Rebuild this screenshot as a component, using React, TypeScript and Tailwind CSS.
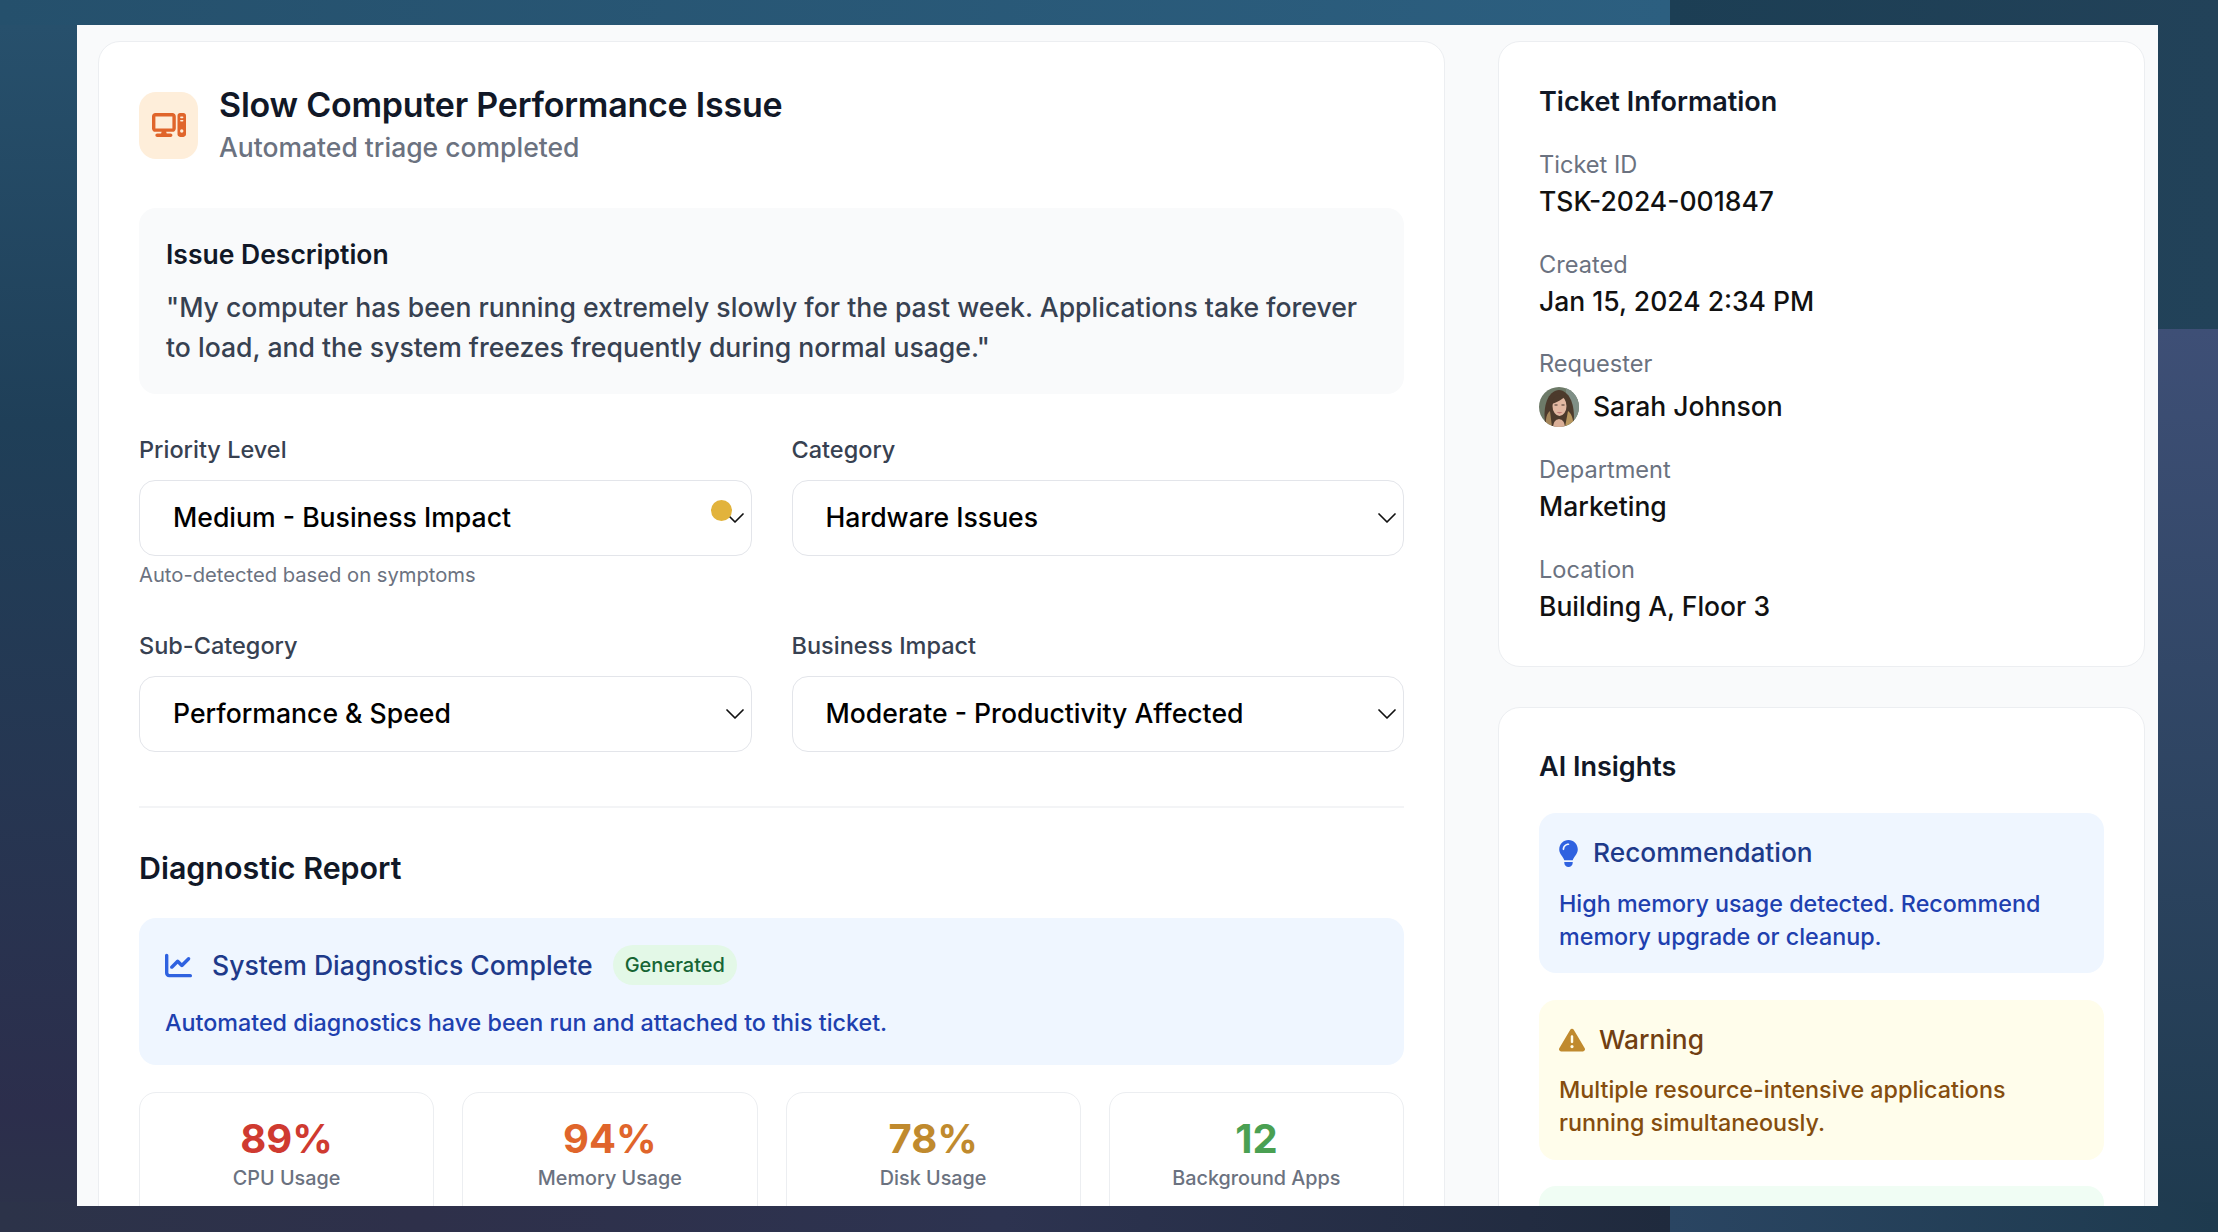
import { ChevronDown } from 'lucide-react';
import { FaChartLine, FaComputer, FaLightbulb, FaTriangleExclamation } from 'react-icons/fa6';

const infoRows = [
  { label: 'Ticket ID', value: 'TSK-2024-001847', gap: 'mt-[29px]' },
  { label: 'Created', value: 'Jan 15, 2024 2:34 PM', gap: 'mt-[30px]' },
];

const infoRowsAfter = [
  { label: 'Department', value: 'Marketing', gap: 'mt-[27px]' },
  { label: 'Location', value: 'Building A, Floor 3', gap: 'mt-[30px]' },
];

const stats = [
  { value: '89%', label: 'CPU Usage', color: 'text-[#cf3a30]' },
  { value: '94%', label: 'Memory Usage', color: 'text-[#e0652b]' },
  { value: '78%', label: 'Disk Usage', color: 'text-[#c08a2e]' },
  { value: '12', label: 'Background Apps', color: 'text-[#4aa052]' },
];

function Avatar() {
  return (
    <svg viewBox="0 0 40 40" className="w-[40px] h-[40px] rounded-full shrink-0">
      <rect width="40" height="40" fill="#6d7a68" />
      <rect x="27" width="13" height="40" fill="#7f8f86" />
      <g className="blur-[0.6px]">
        <path d="M7 40 C3 24 7 4 20 3 C33 4 37 24 34 40 Z" fill="#4c3a2c" />
        <path d="M7 40 C6 32 8 26 11 24 L13 40 Z" fill="#a3855a" />
        <path d="M34 40 C35 32 32 26 29 24 L26 40 Z" fill="#b8975f" />
        <path d="M14 40 C15 34 16 33 20 32 C24 33 25 34 26 40 Z" fill="#d9ae97" />
        <ellipse cx="20.5" cy="19" rx="7" ry="10" fill="#e2b8a2" />
        <path d="M13 17 C13 9 19 7 26 9 C23 13 18 15 13 17 Z" fill="#4c3a2c" />
        <path d="M17.5 25 Q20.5 27.5 23.5 25 Q20.5 26 17.5 25 Z" fill="#a8404e" />
        <rect x="15.5" y="17.5" width="3" height="1" fill="#40302a" />
        <rect x="22.5" y="17.5" width="3" height="1" fill="#40302a" />
      </g>
    </svg>
  );
}

function Field({ label, value, dot, hint }: { label: string; value: string; dot?: boolean; hint?: string }) {
  return (
    <div className="min-w-0">
      <div className="text-[23.5px] leading-[28px] font-medium text-[#374151]">{label}</div>
      <div className="relative mt-[16px] h-[76px] flex items-center pl-[33px] rounded-[16px] bg-white border-[1.5px] border-[#e3e5ea]">
        <span className="flex-1 text-[26.6px] font-medium text-black">{value}</span>
        <ChevronDown className="w-[32px] h-[32px] text-[#111]" strokeWidth={1.3} />
        {dot && <span className="absolute left-[571px] top-[19px] w-[21px] h-[21px] rounded-full bg-[#e2b33c]" />}
      </div>
      {hint && <div className="mt-[7px] text-[20.2px] leading-[24px] text-[#6b7280]">{hint}</div>}
    </div>
  );
}

export default function App() {
  return (
    <div className="relative w-[2218px] h-[1232px] overflow-hidden font-['Inter',sans-serif] bg-[#1f3a50]">
      {/* backdrop pieces, the offset tiles are visible around the sheet */}
      <div className="absolute inset-0 grid grid-cols-[1670px_548px] grid-rows-[329px_903px]">
        <div className="row-span-2 bg-[linear-gradient(to_right,#25506c,#2c5f80)] relative">
          <div className="absolute left-0 top-[25px] w-[80px] h-[1207px] bg-[linear-gradient(to_bottom,#27506c,#1f3f58_33%,#2c2e4c_90%,#2c3349)]" />
          <div className="absolute left-0 bottom-0 w-full h-[30px] bg-[linear-gradient(to_right,#2c3349,#2e304a_25%,#2d3350_60%,#1f2a3d)]" />
        </div>
        <div className="bg-[linear-gradient(to_right,#1c3e54,#224259)]" />
        <div className="relative bg-[linear-gradient(to_bottom,#3e4f76,#1e3a4e)]">
          <div className="absolute left-0 bottom-0 w-full h-[30px] bg-[linear-gradient(to_right,#2a4562,#1e3a4e)]" />
        </div>
      </div>

      <div className="relative mt-[25px] ml-[77px] w-[2081px] h-[1181px] overflow-hidden bg-[#f9fafb] pt-[16px] pl-[21px] pr-[13px] flex gap-[53px] items-start">
        <section className="w-[1347px] shrink-0 bg-white rounded-[22px] border-[1.5px] border-[#eceef1] pt-[42px] px-[40px]">
          <header className="flex items-center gap-[21px]">
            <div className="w-[59px] h-[67px] -mt-[2px] rounded-[17px] bg-[#feeeda] flex items-center justify-center shrink-0">
              <FaComputer className="w-[34px] h-[34px] text-[#e0652b]" />
            </div>
            <div>
              <h1 className="text-[34px] leading-[42px] tracking-[-0.23px] font-semibold text-[#111827]">Slow Computer Performance Issue</h1>
              <p className="text-[26.5px] leading-[42px] font-medium text-[#6b7280]">Automated triage completed</p>
            </div>
          </header>

          <div className="mt-[40px] h-[186px] rounded-[17px] bg-[#f9fafb] px-[27px] pt-[28px]">
            <h2 className="text-[26.5px] leading-[36px] font-semibold text-[#111827]">Issue Description</h2>
            <p className="mt-[16px] text-[26.6px] leading-[39.6px] font-medium text-[#374151]">
              "My computer has been running extremely slowly for the past week. Applications take forever to load, and the system freezes frequently during normal usage."
            </p>
          </div>

          <div className="mt-[42px] grid grid-cols-2 gap-x-[40px]">
            <Field label="Priority Level" value="Medium - Business Impact" dot hint="Auto-detected based on symptoms" />
            <Field label="Category" value="Hardware Issues" />
          </div>
          <div className="mt-[45px] grid grid-cols-2 gap-x-[40px]">
            <Field label="Sub-Category" value="Performance &amp; Speed" />
            <Field label="Business Impact" value="Moderate - Productivity Affected" />
          </div>

          <div className="mt-[54px] border-t-2 border-[#f3f4f6]" />

          <h2 className="mt-[40px] text-[30.4px] leading-[40px] font-semibold text-[#111827]">Diagnostic Report</h2>

          <div className="mt-[30px] h-[147px] rounded-[17px] bg-[#eff6ff] px-[26px] pt-[27px]">
            <div className="flex items-center">
              <FaChartLine className="w-[27px] h-[27px] text-[#2f62e0]" />
              <span className="ml-[20px] text-[26.6px] leading-[40px] font-medium text-[#1e3a8a]">System Diagnostics Complete</span>
              <span className="ml-[20px] h-[40px] px-[12px] flex items-center rounded-full bg-[#e3f8e7] text-[20px] font-medium text-[#166534]">Generated</span>
            </div>
            <p className="mt-[22px] text-[23.3px] leading-[32px] font-medium text-[#1e40af]">Automated diagnostics have been run and attached to this ticket.</p>
          </div>

          <div className="mt-[27px] grid grid-cols-4 gap-[28px]">
            {stats.map((s) => (
              <div key={s.label} className="h-[170px] rounded-[17px] border-[1.5px] border-[#eceef1] pt-[26px] text-center">
                <div className={`text-[40px] leading-[40px] font-bold ${s.color}`}>{s.value}</div>
                <div className="mt-[5px] text-[19.8px] leading-[28px] font-medium text-[#6b7280]">{s.label}</div>
              </div>
            ))}
          </div>
        </section>

        <aside className="w-[647px] shrink-0 flex flex-col gap-[40px]">
          <section className="h-[626px] bg-white rounded-[22px] border-[1.5px] border-[#eceef1] px-[40px] pt-[42px]">
            <h2 className="text-[27px] leading-[36px] font-semibold text-[#111827]">Ticket Information</h2>
            {infoRows.map((r) => (
              <div key={r.label} className={r.gap}>
                <div className="text-[23.6px] leading-[32px] text-[#6b7280]">{r.label}</div>
                <div className="mt-[2px] text-[26.5px] leading-[36px] font-medium text-[#111]">{r.value}</div>
              </div>
            ))}
            <div className="mt-[29px]">
              <div className="text-[23.6px] leading-[32px] text-[#6b7280]">Requester</div>
              <div className="mt-[7px] flex items-center gap-[14px]">
                <Avatar />
                <span className="text-[26.5px] font-medium text-[#111]">Sarah Johnson</span>
              </div>
            </div>
            {infoRowsAfter.map((r) => (
              <div key={r.label} className={r.gap}>
                <div className="text-[23.6px] leading-[32px] text-[#6b7280]">{r.label}</div>
                <div className="mt-[2px] text-[26.5px] leading-[36px] font-medium text-[#111]">{r.value}</div>
              </div>
            ))}
          </section>

          <section className="h-[700px] bg-white rounded-[22px] border-[1.5px] border-[#eceef1] px-[40px] pt-[41px]">
            <h2 className="text-[27px] leading-[36px] font-semibold text-[#111827]">AI Insights</h2>
            <div className="mt-[28px] h-[160px] rounded-[17px] bg-[#eff6ff] px-[20px] pt-[24px]">
              <div className="flex items-center gap-[15px] h-[32px]">
                <FaLightbulb className="w-[27px] h-[27px] -mx-[4px] text-[#2f62e0]" />
                <span className="text-[26.3px] font-medium text-[#1e3a8a]">Recommendation</span>
              </div>
              <p className="mt-[18px] text-[23.3px] leading-[33px] font-medium text-[#1e40af]">High memory usage detected. Recommend memory upgrade or cleanup.</p>
            </div>
            <div className="mt-[27px] h-[160px] rounded-[17px] bg-[#fffdeb] px-[20px] pt-[24px]">
              <div className="flex items-center gap-[14px] h-[32px]">
                <FaTriangleExclamation className="w-[26px] h-[26px] text-[#c08a2e]" />
                <span className="text-[26.3px] font-medium text-[#713f12]">Warning</span>
              </div>
              <p className="mt-[17px] text-[23.3px] leading-[33px] font-medium text-[#854d0e]">Multiple resource-intensive applications running simultaneously.</p>
            </div>
            <div className="mt-[26px] h-[157px] rounded-[17px] bg-[#f0fdf4]" />
          </section>
        </aside>
      </div>
    </div>
  );
}
